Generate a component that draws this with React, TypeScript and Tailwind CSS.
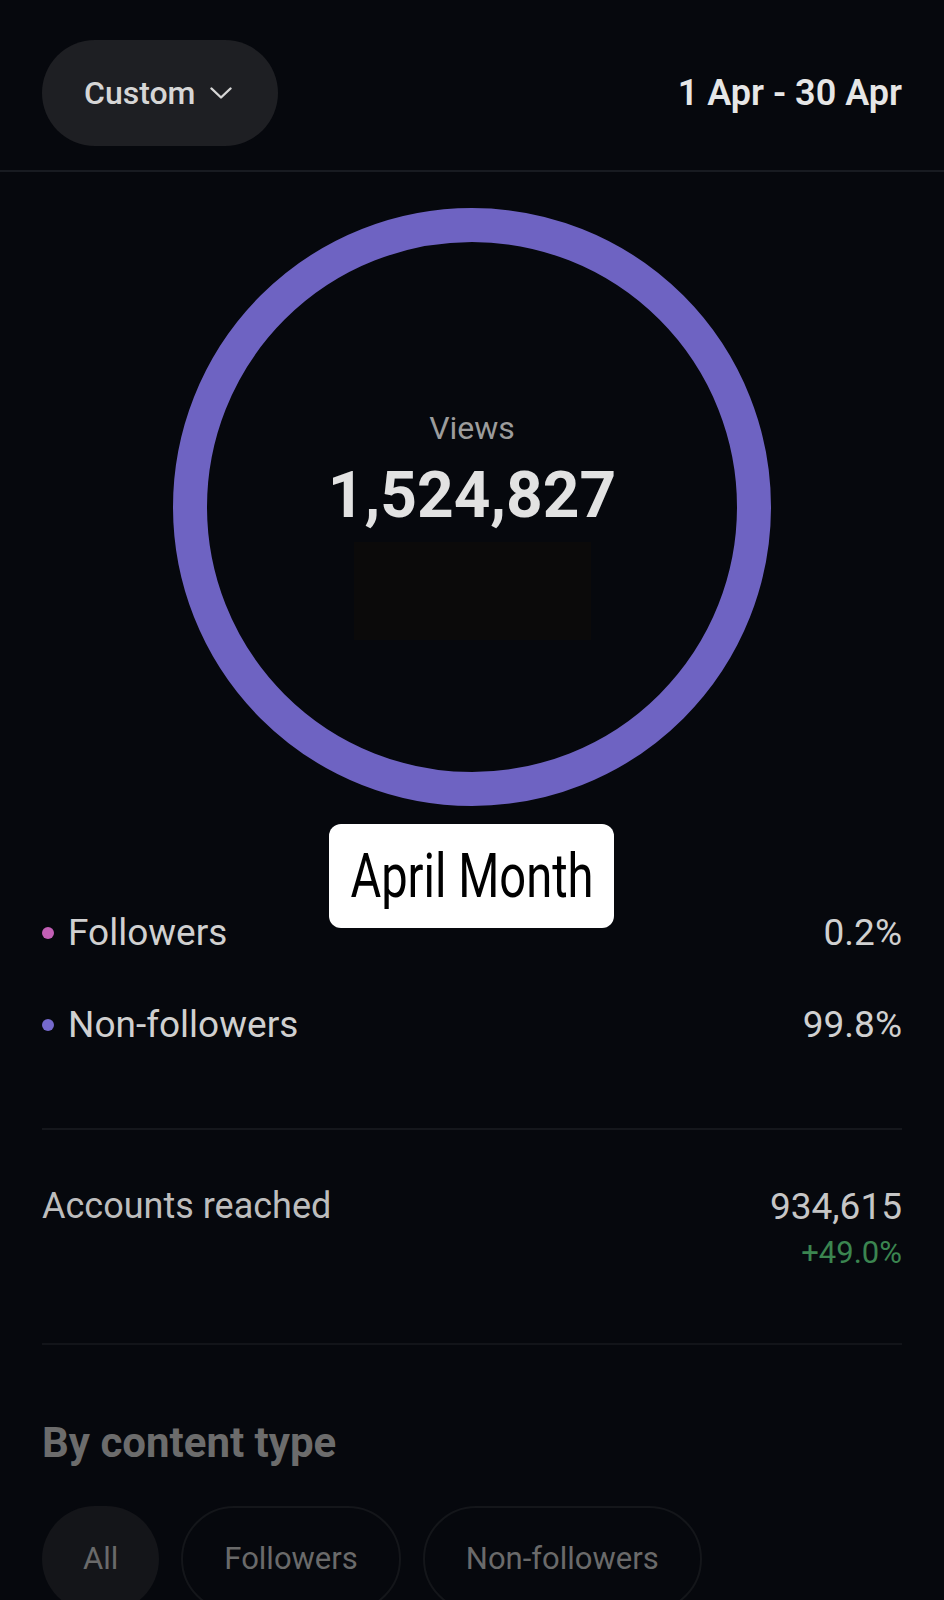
import React from 'react';

const chips = [
  { label: 'All', active: true },
  { label: 'Followers', active: false },
  { label: 'Non-followers', active: false },
];

const audience = [
  { label: 'Followers', value: '0.2%', dot: 'bg-[#c25fb5]' },
  { label: 'Non-followers', value: '99.8%', dot: 'bg-[#7569cc]' },
];

export default function App() {
  return (
    <div className="relative w-[944px] min-h-[1600px] overflow-hidden bg-[#06080d] font-['Roboto','Liberation_Sans',sans-serif]">
      {/* Header */}
      <div className="flex items-center justify-between px-[42px] pt-[40px] pb-[24px] border-b-2 border-[#181b21]">
        <button className="flex h-[106px] items-center gap-[15px] rounded-full bg-[#1e1f23] pl-[42px] pr-[46px] text-[32px] font-medium text-[#d6d6d6]">
          Custom
          <svg width="22" height="12" viewBox="0 0 22 12" fill="none">
            <polyline points="1.5,1.5 11,10.5 20.5,1.5" stroke="#d6d6d6" strokeWidth="2.4" strokeLinecap="round" strokeLinejoin="round" />
          </svg>
        </button>
        <span className="text-[36px] font-semibold text-[#e6e6e6]">1 Apr - 30 Apr</span>
      </div>

      {/* Views ring */}
      <div className="mt-[36px] flex justify-center">
        <div className="grid">
          <svg className="col-start-1 row-start-1" width="598" height="598" viewBox="0 0 598 598">
            <circle cx="299" cy="299" r="282" fill="none" stroke="#6e63c2" strokeWidth="34" />
          </svg>
          <div className="col-start-1 row-start-1 flex flex-col items-center pt-[204px]">
            <span className="text-[32px] leading-none text-[#9c9c9c]">Views</span>
            <span className="mt-[20px] text-[64px] font-bold leading-none text-[#e2e2e2]">1,524,827</span>
            <div className="mt-[14px] h-[98px] w-[237px] bg-[#0b0a0a]" />
          </div>
        </div>
      </div>

      {/* Followers / non-followers */}
      <div className="flex flex-col gap-[55px] pt-[108px]">
        {audience.map((row) => (
          <div key={row.label} className="flex items-center justify-between px-[42px] text-[37px] leading-none text-[#d0d0d0]">
            <div className="flex items-center gap-[14px]">
              <span className={`h-[12px] w-[12px] rounded-full ${row.dot}`} />
              <span>{row.label}</span>
            </div>
            <span>{row.value}</span>
          </div>
        ))}
      </div>

      <div className="mx-[42px] mt-[85px] h-[2px] bg-[#15171c]" />

      {/* Accounts reached */}
      <div className="mt-[58px] flex items-start justify-between px-[42px]">
        <span className="text-[36px] leading-none text-[#bdbdbd]">Accounts reached</span>
        <div className="flex flex-col items-end">
          <span className="text-[37px] leading-none text-[#c6c6c6]">934,615</span>
          <span className="mt-[12px] text-[31px] leading-none text-[#3b8550]">+49.0%</span>
        </div>
      </div>

      <div className="mx-[42px] mt-[75px] h-[2px] bg-[#121419]" />

      {/* By content type */}
      <h2 className="mt-[77px] px-[42px] text-[42px] font-bold leading-none text-[#6c6c6c]">By content type</h2>
      <div className="mt-[42px] flex gap-[22px] px-[42px]">
        {chips.map((chip) => (
          <div
            key={chip.label}
            className={`flex h-[106px] items-center rounded-full px-[41px] text-[31px] text-[#6a6a6a] ${
              chip.active ? 'bg-[#141519]' : 'border-2 border-[#14161a]'
            }`}
          >
            {chip.label}
          </div>
        ))}
      </div>

      {/* Story sticker */}
      <div className="absolute left-[329px] top-[824px] flex h-[104px] w-[285px] items-center justify-center rounded-[12px] bg-white">
        <span className="inline-block whitespace-nowrap text-[62px] leading-none text-black scale-x-[0.76]">
          April Month
        </span>
      </div>
    </div>
  );
}
